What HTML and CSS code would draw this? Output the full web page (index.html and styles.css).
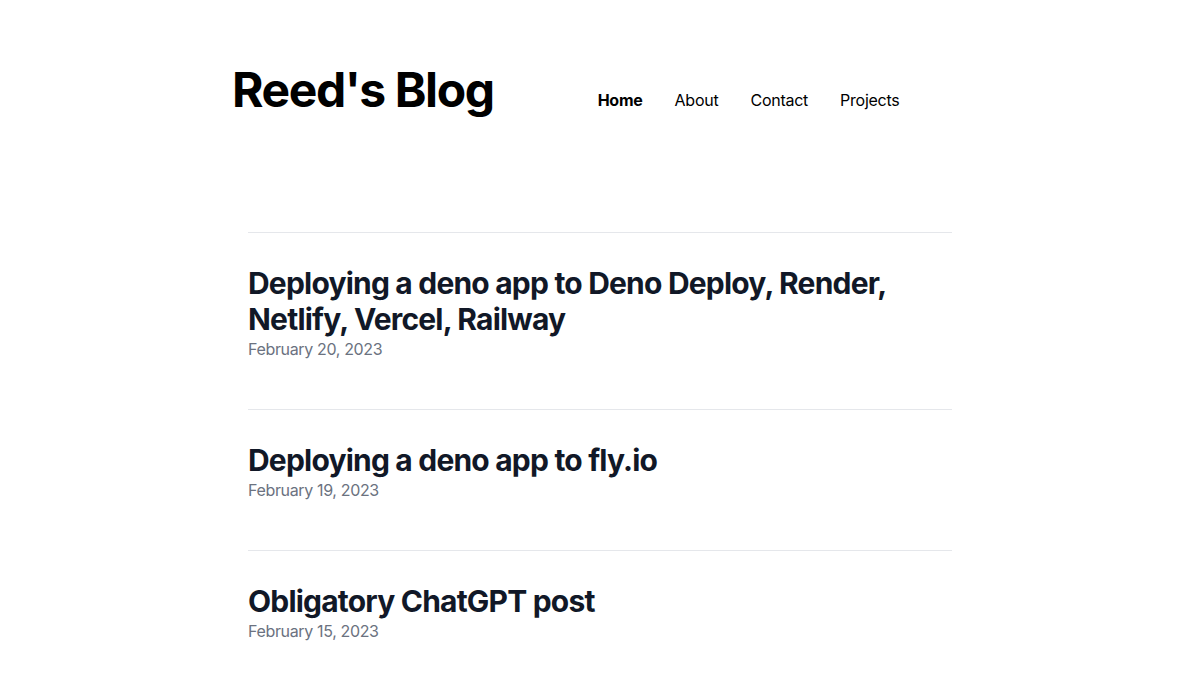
FILE: index.html
```html
<!DOCTYPE html>
<html lang="en">
<head>
<meta charset="utf-8">
<title>Reed's Blog</title>
<link rel="stylesheet" href="styles.css">
</head>
<body>
<header class="site-header">
  <h1 class="site-title">Reed's Blog</h1>
  <nav class="nav">
    <a class="nav-link active" href="#">Home</a>
    <a class="nav-link" href="#">About</a>
    <a class="nav-link" href="#">Contact</a>
    <a class="nav-link" href="#">Projects</a>
  </nav>
</header>
<main class="posts">
  <article class="post">
    <h2 class="post-title">Deploying a deno app to Deno Deploy, Render, Netlify, Vercel, Railway</h2>
    <time class="post-date">February 20, 2023</time>
  </article>
  <article class="post">
    <h2 class="post-title">Deploying a deno app to fly.io</h2>
    <time class="post-date">February 19, 2023</time>
  </article>
  <article class="post">
    <h2 class="post-title">Obligatory ChatGPT post</h2>
    <time class="post-date">February 15, 2023</time>
  </article>
</main>
</body>
</html>
```
FILE: styles.css
```css
* { box-sizing: border-box; }
html, body { margin: 0; padding: 0; background: #fff; }
body {
  font-family: Inter, "Liberation Sans", sans-serif;
  color: #000;
  overflow: hidden;
}
.site-header {
  width: 736px;
  margin: 0 auto;
  padding-top: 66px;
  display: flex;
  align-items: flex-start;
}
.site-title {
  margin: 0;
  font-size: 48px;
  line-height: 48px;
  font-weight: 700;
  letter-spacing: -1.4px;
}
.nav {
  display: flex;
  margin-left: 88px;
  margin-top: 22px;
}
.nav-link {
  color: #000;
  text-decoration: none;
  font-size: 16px;
  line-height: 24px;
  padding: 0 16px;
  letter-spacing: -0.25px;
}
.nav-link.active { font-weight: 700; }
.posts {
  width: 704px;
  margin: 118px auto 0;
}
.post {
  border-top: 1px solid #e5e7eb;
  padding: 32px 0 48px;
}
.post-title {
  margin: 0;
  font-size: 30px;
  line-height: 36px;
  font-weight: 700;
  color: #111827;
  letter-spacing: -0.8px;
}
.post-date {
  display: block;
  font-size: 16px;
  line-height: 24px;
  color: #6b7280;
  letter-spacing: -0.35px;
}
```
